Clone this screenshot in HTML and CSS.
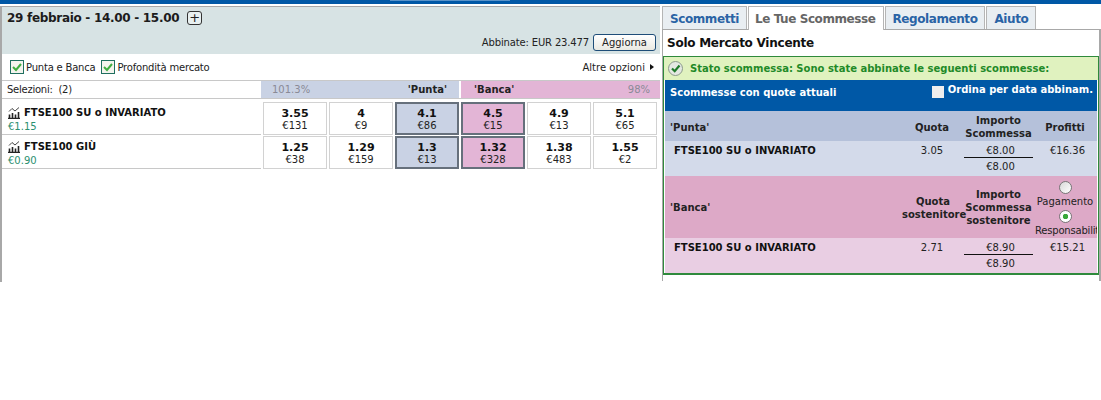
FILE: index.html
```html
<!DOCTYPE html>
<html lang="it">
<head>
<meta charset="utf-8">
<title>Solo Mercato Vincente</title>
<link rel="stylesheet" href="styles.css">
</head>
<body>
<div class="topbar"><div class="toptab"></div></div>
<div class="main">
  <section class="left">
    <div class="market-head">
      <div class="market-title"><h1>29 febbraio - 14.00 - 15.00</h1><span class="plus">+</span></div>
      <div class="matched"><span>Abbinate: EUR 23.477</span><button class="refresh">Aggiorna</button></div>
    </div>
    <div class="options">
      <label class="check"><svg class="box" viewBox="0 0 14 14"><rect x=".5" y=".5" width="13" height="13" fill="#f4f4ee" stroke="#1f6f5f"/><path d="M3 7l3 3 5-6" fill="none" stroke="#3fae3f" stroke-width="2"/></svg>Punta e Banca</label>
      <label class="check"><svg class="box" viewBox="0 0 14 14"><rect x=".5" y=".5" width="13" height="13" fill="#f4f4ee" stroke="#1f6f5f"/><path d="M3 7l3 3 5-6" fill="none" stroke="#3fae3f" stroke-width="2"/></svg>Profondità mercato</label>
      <span class="more">Altre opzioni<i class="arrow"></i></span>
    </div>
    <div class="sel-head">
      <div class="sel-count">Selezioni:&nbsp; (2)</div>
      <div class="back-bar"><span class="pct">101.3%</span><b>'Punta'</b></div>
      <div class="lay-bar"><b>'Banca'</b><span class="pct">98%</span></div>
    </div>
    <div class="runner">
      <div class="runner-name">
        <div class="rn"><svg class="chart" viewBox="0 0 12 12"><path d="M0 11.500h12M1.500 11V7.500M4.500 11V6M7.500 11V7.500M10.500 11V5" fill="none" stroke="#222" stroke-width="1.600"/><path d="M1 4.500L4 1.500l3 2.500 4-3.500" fill="none" stroke="#444"/></svg>FTSE100 SU o INVARIATO</div>
        <div class="pl">€1.15</div>
      </div>
      <div class="price"><b>3.55</b><span>€131</span></div>
      <div class="price"><b>4</b><span>€9</span></div>
      <div class="price back"><b>4.1</b><span>€86</span></div>
      <div class="price lay"><b>4.5</b><span>€15</span></div>
      <div class="price"><b>4.9</b><span>€13</span></div>
      <div class="price"><b>5.1</b><span>€65</span></div>
    </div>
    <div class="runner">
      <div class="runner-name">
        <div class="rn"><svg class="chart" viewBox="0 0 12 12"><path d="M0 11.500h12M1.500 11V7.500M4.500 11V6M7.500 11V7.500M10.500 11V5" fill="none" stroke="#222" stroke-width="1.600"/><path d="M1 4.500L4 1.500l3 2.500 4-3.500" fill="none" stroke="#444"/></svg>FTSE100 GIÙ</div>
        <div class="pl">€0.90</div>
      </div>
      <div class="price"><b>1.25</b><span>€38</span></div>
      <div class="price"><b>1.29</b><span>€159</span></div>
      <div class="price back"><b>1.3</b><span>€13</span></div>
      <div class="price lay"><b>1.32</b><span>€328</span></div>
      <div class="price"><b>1.38</b><span>€483</span></div>
      <div class="price"><b>1.55</b><span>€2</span></div>
    </div>
  </section>
  <section class="right">
    <nav class="tabs">
      <a class="tab">Scommetti</a>
      <a class="tab active">Le Tue Scommesse</a>
      <a class="tab">Regolamento</a>
      <a class="tab">Aiuto</a>
    </nav>
    <div class="panel">
      <h2>Solo Mercato Vincente</h2>
      <div class="betbox">
        <div class="status"><svg class="ok" viewBox="0 0 15 15"><circle cx="7.500" cy="7.500" r="7" fill="#e4e8e2" stroke="#8a9a8a"/><path d="M4 7.500l2.700 2.700L11.500 4.500" fill="none" stroke="#1f7a2a" stroke-width="2.200"/></svg>Stato scommessa: Sono state abbinate le seguenti scommesse:</div>
        <div class="bluebar"><span>Scommesse con quote attuali</span><label class="order"><i class="sq"></i>Ordina per data abbinam.</label></div>
        <div class="bet-head back-head">
          <div class="c-name">'Punta'</div><div class="c-odds">Quota</div><div class="c-stake">Importo Scommessa</div><div class="c-profit">Profitti</div>
        </div>
        <div class="bet-row back-row">
          <div class="c-name">FTSE100 SU o INVARIATO</div><div class="c-odds">3.05</div>
          <div class="c-stake"><div class="st">€8.00</div><div>€8.00</div></div><div class="c-profit">€16.36</div>
        </div>
        <div class="bet-head lay-head">
          <div class="c-name">'Banca'</div><div class="c-odds">Quota sostenitore</div><div class="c-stake">Importo Scommessa sostenitore</div>
          <div class="c-profit radios"><i class="radio"></i><span class="pay">Pagamento</span><i class="radio on"></i><span class="resp">Responsabilità</span></div>
        </div>
        <div class="bet-row lay-row">
          <div class="c-name">FTSE100 SU o INVARIATO</div><div class="c-odds">2.71</div>
          <div class="c-stake"><div class="st">€8.90</div><div>€8.90</div></div><div class="c-profit">€15.21</div>
        </div>
      </div>
    </div>
  </section>
</div>
</body>
</html>
```
FILE: styles.css
```css
* { box-sizing: border-box; }
html, body { margin: 0; padding: 0; background: #fff; }
body { width: 1101px; height: 400px; overflow: hidden; font: 10px "DejaVu Sans", sans-serif; color: #222; }
.topbar { height: 4px; background: #0058a6; display: flex; }
.toptab { width: 120px; height: 1px; margin-left: 390px; background: #5a93c8; }
.main { display: flex; margin-top: 2px; height: 276px; }

.left { width: 660px; border-left: 2px solid #a8a8a8; }
.market-head { height: 48px; background: #d7e3e4; border-top: 1px solid #a8a8a8; position: relative; }
.market-title { display: flex; align-items: center; padding: 4px 0 0 5px; gap: 8px; }
h1 { margin: 0; font-size: 12px; font-weight: bold; color: #1c1c1c; letter-spacing: -.3px; }
.plus { width: 15px; height: 14px; border: 1px solid #333; border-radius: 3px; font-size: 13px; line-height: 11px; text-align: center; color: #222; background: #e8f0f0; }
.matched { position: absolute; right: 4px; bottom: 3px; display: flex; align-items: center; gap: 4px; letter-spacing: -.15px; }
.refresh { width: 63px; height: 17px; padding: 0; font: 10px "DejaVu Sans", sans-serif; color: #222; background: linear-gradient(#fff, #e9e9e2); border: 1px solid #1e4d78; border-radius: 3px; }

.options { height: 26px; display: flex; align-items: center; padding-left: 8px; gap: 6px; }
.check { display: flex; align-items: center; gap: 2px; letter-spacing: -.2px; }
.box { width: 14px; height: 14px; }
.more { margin-left: auto; margin-right: 6px; display: flex; align-items: center; gap: 5px; }
.arrow { width: 0; height: 0; border-left: 4px solid #111; border-top: 3.500px solid transparent; border-bottom: 3.500px solid transparent; }

.sel-head { height: 19px; display: flex; border-top: 1px solid #c8c8c8; border-bottom: 1px solid #c8c8c8; }
.sel-count { width: 259px; padding: 3px 0 0 5px; letter-spacing: -.25px; }
.back-bar { width: 198px; background: #c9d2e4; display: flex; justify-content: space-between; padding: 3px 12px 0 11px; }
.lay-bar { flex: 1; margin-left: 2px; background: #e3b5d6; display: flex; justify-content: space-between; padding: 3px 10px 0 13px; }
.pct { color: #8a8a96; }

.runner { display: flex; gap: 2px; height: 36px; }
.runner + .runner { height: 34px; }
.runner-name { width: 259px; border-bottom: 1px solid #c8c8c8; padding: 7px 0 0 6px; }
.runner + .runner .runner-name { padding-top: 5px; }
.rn { display: flex; align-items: center; gap: 4px; font-weight: bold; color: #111; height: 13px; }
.chart { width: 12px; height: 12px; }
.pl { color: #2b9070; margin-top: 2px; }
.price { width: 64px; height: 33px; margin-top: 3px; border: 1px solid #d2d2d2; display: flex; flex-direction: column; align-items: center; padding-top: 4px; line-height: 12px; }
.runner + .runner .price { margin-top: 1px; }
.price b { font-size: 11px; color: #111; line-height: 13px; }
.price span { font-size: 10px; color: #222; }
.back { background: #c9d2e4; border: 2px solid #66707c; padding-top: 3px; }
.lay { background: #e3b5d6; border: 2px solid #66707c; padding-top: 3px; }

.right { margin-left: 2px; width: 439px; }
.tabs { height: 24px; display: flex; gap: 1px; }
.tab { height: 23px; padding: 5px 7px 0; border: 1px solid #b5b5b5; border-bottom: 0; background: #e9eef2; color: #2a63a5; font-weight: bold; font-size: 12px; letter-spacing: -.42px; }
.active { height: 24px; padding-left: 6px; background: #fff; color: #666; position: relative; z-index: 1; }
.panel { height: 252px; margin-top: -1px; border: 1px solid #a8a8a8; border-bottom: 0; border-right-width: 2px; }
h2 { margin: 0; height: 26px; padding: 6px 0 0 4px; font-size: 12px; font-weight: bold; color: #111; letter-spacing: -.25px; }
.betbox { height: 219px; border: 1px solid #2f8a3c; border-bottom-width: 2px; display: flex; flex-direction: column; }
.status { height: 23px; background: #e0f2bf; color: #1f8a28; font-weight: bold; display: flex; align-items: center; gap: 7px; padding-left: 4px; }
.ok { width: 15px; height: 15px; }
.bluebar { height: 31px; margin: 0 1px; background: #0058a6; color: #fff; font-weight: bold; display: flex; justify-content: space-between; padding: 7px 4px 0 5px; }
.order { display: flex; gap: 4px; align-items: flex-start; margin-top: -3px; }
.sq { width: 12px; height: 12px; background: #eee; margin-top: 2px; }
.bet-head, .bet-row { margin: 0 1px; display: grid; grid-template-columns: 235px 64px 69px 64px; text-align: center; }
.bet-head { font-weight: bold; align-items: center; line-height: 13px; padding-top: 2px; }
.bet-head .c-name, .bet-row .c-name { text-align: left; }
.back-head { height: 30px; background: #b5c1da; }
.back-row { height: 35px; background: #d3daea; }
.lay-head { height: 62px; background: #dda9c7; padding-top: 0; }
.lay-head .c-odds { padding: 2px 0 0 2px; }
.lay-row { height: 35px; background: #e9cee3; }
.bet-head .c-name { padding-left: 5px; }
.bet-row .c-name { padding-left: 9px; font-weight: bold; color: #111; }
.bet-row { padding-top: 4px; }
.bet-row .c-stake { text-indent: 4px; }
.bet-row .c-profit { padding-left: 5px; }
.st { border-bottom: 1px solid #111; padding-bottom: 1px; margin-bottom: 3px; }
.radios { display: flex; flex-direction: column; align-items: center; align-self: start; padding-top: 5px; font-weight: normal; white-space: nowrap; overflow: hidden; }
.radios span { margin: 1px 0; }
.radios .pay { margin-bottom: 2px; }
.radios .resp { align-self: flex-start; margin-left: 2px; letter-spacing: -.2px; }
.radio { width: 13px; height: 13px; border: 1px solid #777; border-radius: 50%; background: linear-gradient(135deg, #d8d8d8, #fff); display: block; flex: none; }
.radio.on { background: radial-gradient(circle, #3aa83a 0 2.500px, #fff 3px); }
```
